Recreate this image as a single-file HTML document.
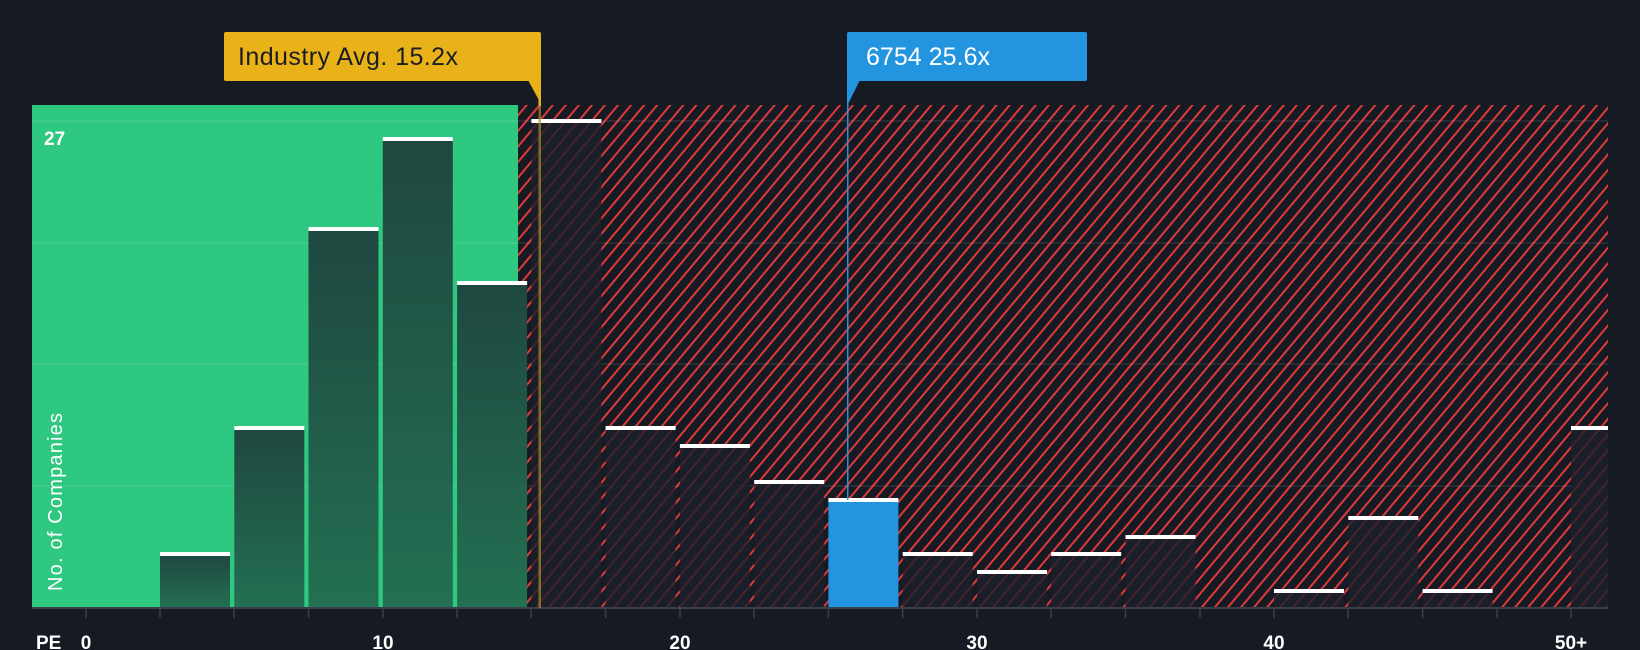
<!DOCTYPE html>
<html><head><meta charset="utf-8"><style>
html,body{margin:0;padding:0;background:#151a23;}
svg{display:block}
text{font-family:"Liberation Sans",sans-serif;}
</style></head><body>
<svg width="1640" height="650" viewBox="0 0 1640 650" xmlns="http://www.w3.org/2000/svg">
<defs>
<pattern id="h" patternUnits="userSpaceOnUse" width="10" height="10" patternTransform="rotate(40)">
<rect width="10" height="10" fill="#151a23"/>
<rect x="0" y="0" width="2" height="10" fill="#e0393c"/>
</pattern>
<linearGradient id="g" x1="0" y1="0" x2="0" y2="1">
<stop offset="0" stop-color="#1f4740"/><stop offset="1" stop-color="#237052"/>
</linearGradient>
</defs>
<rect width="1640" height="650" fill="#151a23"/>
<rect x="32" y="105" width="486" height="503" fill="#2ec880"/>
<rect x="518" y="105" width="1090" height="503" fill="url(#h)"/>
<g stroke="#ffffff" stroke-opacity="0.1" stroke-width="1.5">
<line x1="32" y1="121" x2="1608" y2="121"/><line x1="32" y1="243" x2="1608" y2="243"/>
<line x1="32" y1="364" x2="1608" y2="364"/><line x1="32" y1="486" x2="1608" y2="486"/>
</g>
<g fill="url(#g)">
<rect x="160" y="554" width="70" height="54"/>
<rect x="234.3" y="428" width="70" height="180"/>
<rect x="308.5" y="229" width="70" height="379"/>
<rect x="382.8" y="139" width="70" height="469"/>
<rect x="457.1" y="283" width="70" height="325"/>
</g>
<g fill="#1c1f29" fill-opacity="0.8">
<rect x="531.4" y="121" width="70" height="487"/>
<rect x="605.6" y="428" width="70" height="180"/>
<rect x="679.9" y="446" width="70" height="162"/>
<rect x="754.2" y="482" width="70" height="126"/>
<rect x="902.7" y="554" width="70" height="54"/>
<rect x="977" y="572" width="70" height="36"/>
<rect x="1051.2" y="554" width="70" height="54"/>
<rect x="1125.5" y="537" width="70" height="71"/>
<rect x="1274" y="591" width="70" height="17"/>
<rect x="1348.3" y="518" width="70" height="90"/>
<rect x="1422.6" y="591" width="70" height="17"/>
<rect x="1571" y="428" width="37" height="180"/>
</g>
<rect x="828.4" y="500" width="70" height="108" fill="#2394e0"/>
<g fill="#ffffff">
<rect x="160" y="552" width="70" height="4"/>
<rect x="234.3" y="426" width="70" height="4"/>
<rect x="308.5" y="227" width="70" height="4"/>
<rect x="382.8" y="137" width="70" height="4"/>
<rect x="457.1" y="281" width="70" height="4"/>
<rect x="531.4" y="119" width="70" height="4"/>
<rect x="605.6" y="426" width="70" height="4"/>
<rect x="679.9" y="444" width="70" height="4"/>
<rect x="754.2" y="480" width="70" height="4"/>
<rect x="828.4" y="498" width="70" height="4"/>
<rect x="902.7" y="552" width="70" height="4"/>
<rect x="977" y="570" width="70" height="4"/>
<rect x="1051.2" y="552" width="70" height="4"/>
<rect x="1125.5" y="535" width="70" height="4"/>
<rect x="1274" y="589" width="70" height="4"/>
<rect x="1348.3" y="516" width="70" height="4"/>
<rect x="1422.6" y="589" width="70" height="4"/>
<rect x="1571" y="426" width="37" height="4"/>
</g>
<rect x="32" y="607" width="1576" height="2" fill="#3a404b"/>
<g stroke="#3a404b" stroke-width="1.5">
<line x1="86" y1="608" x2="86" y2="618"/><line x1="160" y1="608" x2="160" y2="618"/>
<line x1="234" y1="608" x2="234" y2="618"/><line x1="308.5" y1="608" x2="308.5" y2="618"/>
<line x1="383" y1="608" x2="383" y2="618"/><line x1="457" y1="608" x2="457" y2="618"/>
<line x1="531" y1="608" x2="531" y2="618"/><line x1="605.6" y1="608" x2="605.6" y2="618"/>
<line x1="680" y1="608" x2="680" y2="618"/><line x1="754" y1="608" x2="754" y2="618"/>
<line x1="828.4" y1="608" x2="828.4" y2="618"/><line x1="902.7" y1="608" x2="902.7" y2="618"/>
<line x1="977" y1="608" x2="977" y2="618"/><line x1="1051" y1="608" x2="1051" y2="618"/>
<line x1="1125.5" y1="608" x2="1125.5" y2="618"/><line x1="1200" y1="608" x2="1200" y2="618"/>
<line x1="1274" y1="608" x2="1274" y2="618"/><line x1="1348" y1="608" x2="1348" y2="618"/>
<line x1="1422.6" y1="608" x2="1422.6" y2="618"/><line x1="1497" y1="608" x2="1497" y2="618"/>
<line x1="1571" y1="608" x2="1571" y2="618"/>
</g>
<g fill="#ffffff" font-size="19" font-weight="bold" text-anchor="middle">
<text x="36" y="649" text-anchor="start">PE</text>
<text x="86" y="649">0</text><text x="383" y="649">10</text><text x="680" y="649">20</text>
<text x="977" y="649">30</text><text x="1274" y="649">40</text><text x="1571" y="649">50+</text>
</g>
<text x="44" y="145" fill="#ffffff" font-size="19" font-weight="bold">27</text>
<text transform="translate(62,591) rotate(-90)" fill="#ffffff" font-size="20" textLength="178">No. of Companies</text>
<rect x="538.5" y="81" width="2.5" height="527" fill="#b08a2a" opacity="0.7"/>
<rect x="538.5" y="81" width="2.5" height="25" fill="#eab219"/>
<path d="M528 80 L541 80 L541 104 Z" fill="#eab219"/>
<rect x="224" y="32" width="317" height="49" rx="2" fill="#eab219"/>
<text x="238" y="65" fill="#1a1d24" font-size="25" textLength="220">Industry Avg. 15.2x</text>
<rect x="847" y="81" width="1.5" height="419" fill="#2394e0"/>
<path d="M847 80 L860 80 L847 106 Z" fill="#2394e0"/>
<rect x="847" y="32" width="240" height="49" rx="2" fill="#2394e0"/>
<text x="866" y="65" fill="#ffffff" font-size="25" textLength="124">6754 25.6x</text>
</svg>
</body></html>
